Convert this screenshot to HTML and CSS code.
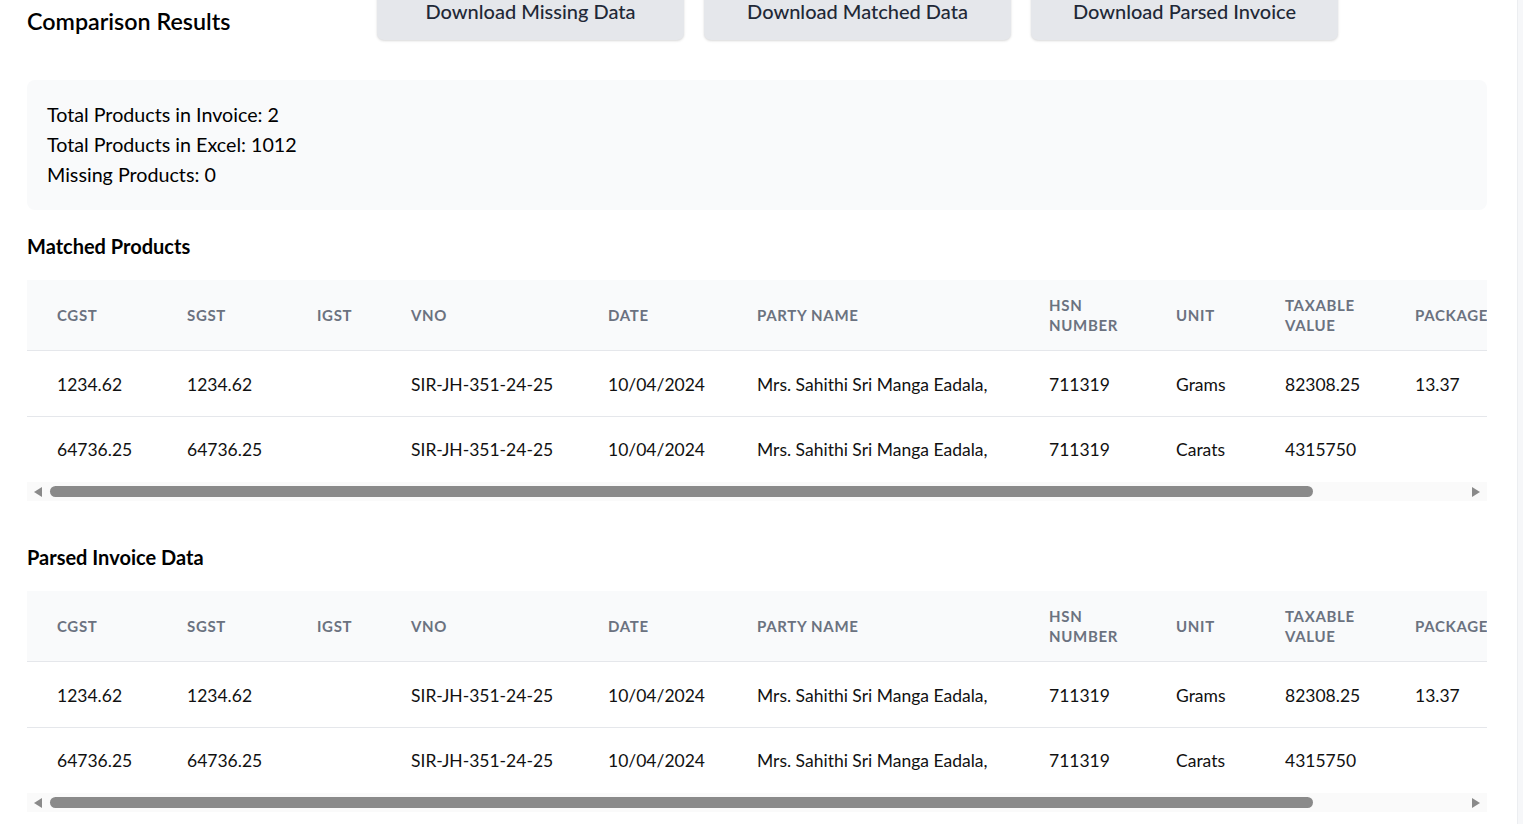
FILE: index.html
```html
<!DOCTYPE html>
<html lang="en">
<head>
<meta charset="utf-8">
<title>Comparison Results</title>
<link rel="stylesheet" href="styles.css">
</head>
<body>
<div class="layout">
  <main class="page">
    <header class="page-header">
      <h1 class="page-title">Comparison Results</h1>
      <div class="actions">
        <button class="btn">Download Missing Data</button>
        <button class="btn">Download Matched Data</button>
        <button class="btn">Download Parsed Invoice</button>
      </div>
    </header>

    <section class="summary">
      <p>Total Products in Invoice: 2</p>
      <p>Total Products in Excel: 1012</p>
      <p>Missing Products: 0</p>
    </section>

    <section class="block">
      <h2 class="block-title">Matched Products</h2>
      <div class="table-wrap">
        <div class="table-clip">
          <table class="data">
            <colgroup>
              <col class="c1"><col class="c2"><col class="c3"><col class="c4"><col class="c5">
              <col class="c6"><col class="c7"><col class="c8"><col class="c9"><col class="c10">
            </colgroup>
            <thead>
              <tr>
                <th>CGST</th><th>SGST</th><th>IGST</th><th>VNO</th><th>DATE</th><th>PARTY NAME</th>
                <th>HSN<br>NUMBER</th><th>UNIT</th><th>TAXABLE<br>VALUE</th><th>PACKAGES</th>
              </tr>
            </thead>
            <tbody>
              <tr>
                <td>1234.62</td><td>1234.62</td><td></td><td>SIR-JH-351-24-25</td><td>10/04/2024</td>
                <td>Mrs. Sahithi Sri Manga Eadala,</td><td>711319</td><td>Grams</td><td>82308.25</td><td>13.37</td>
              </tr>
              <tr>
                <td>64736.25</td><td>64736.25</td><td></td><td>SIR-JH-351-24-25</td><td>10/04/2024</td>
                <td>Mrs. Sahithi Sri Manga Eadala,</td><td>711319</td><td>Carats</td><td>4315750</td><td></td>
              </tr>
            </tbody>
          </table>
        </div>
        <div class="hscroll">
          <span class="arrow arrow-left"></span>
          <div class="track"><div class="thumb"></div></div>
          <span class="arrow arrow-right"></span>
        </div>
      </div>
    </section>

    <section class="block">
      <h2 class="block-title">Parsed Invoice Data</h2>
      <div class="table-wrap">
        <div class="table-clip">
          <table class="data">
            <colgroup>
              <col class="c1"><col class="c2"><col class="c3"><col class="c4"><col class="c5">
              <col class="c6"><col class="c7"><col class="c8"><col class="c9"><col class="c10">
            </colgroup>
            <thead>
              <tr>
                <th>CGST</th><th>SGST</th><th>IGST</th><th>VNO</th><th>DATE</th><th>PARTY NAME</th>
                <th>HSN<br>NUMBER</th><th>UNIT</th><th>TAXABLE<br>VALUE</th><th>PACKAGES</th>
              </tr>
            </thead>
            <tbody>
              <tr>
                <td>1234.62</td><td>1234.62</td><td></td><td>SIR-JH-351-24-25</td><td>10/04/2024</td>
                <td>Mrs. Sahithi Sri Manga Eadala,</td><td>711319</td><td>Grams</td><td>82308.25</td><td>13.37</td>
              </tr>
              <tr>
                <td>64736.25</td><td>64736.25</td><td></td><td>SIR-JH-351-24-25</td><td>10/04/2024</td>
                <td>Mrs. Sahithi Sri Manga Eadala,</td><td>711319</td><td>Carats</td><td>4315750</td><td></td>
              </tr>
            </tbody>
          </table>
        </div>
        <div class="hscroll">
          <span class="arrow arrow-left"></span>
          <div class="track"><div class="thumb"></div></div>
          <span class="arrow arrow-right"></span>
        </div>
      </div>
    </section>
  </main>
  <aside class="edge"></aside>
</div>
</body>
</html>
```

FILE: styles.css
```css
* { box-sizing: border-box; }

html, body {
  margin: 0;
  padding: 0;
  background: #ffffff;
  overflow: hidden;
}

body {
  font-family: "Lato", "Open Sans", "Noto Sans", sans-serif;
  color: #111111;
}

.layout {
  display: flex;
  width: 1523px;
  height: 824px;
  overflow: hidden;
}

.page {
  flex: 1 1 auto;
  min-width: 0;
  padding: 0 30px 0 27px;
  margin-top: -18px;
}

.edge {
  flex: 0 0 6px;
  background: #f6f7f9;
  border-left: 1px solid #eceef1;
}

.page-header {
  display: flex;
  align-items: flex-start;
}

.page-title {
  flex: 0 0 350px;
  margin: 25px 0 0;
  font-size: 23.3px;
  line-height: 28px;
  font-weight: 600;
  color: #000;
}

.actions {
  display: flex;
  gap: 20px;
}

.btn {
  width: 307px;
  padding: 15px 0;
  border: 0;
  border-radius: 7px;
  background: #e5e7eb;
  color: #1f2937;
  font-family: inherit;
  font-size: 20px;
  line-height: 28px;
  font-weight: 500;
  box-shadow: 0 1px 3px rgba(0,0,0,0.10), 0 1px 2px rgba(0,0,0,0.06);
}

.summary {
  margin-top: 40px;
  padding: 20px;
  background: #f9fafb;
  border-radius: 8px;
}

.summary p {
  margin: 0;
  font-size: 19.7px;
  line-height: 30px;
  color: #000;
}

.block {
  display: flow-root;
}

.block-title {
  margin: 22px 0 20px;
  font-size: 20px;
  line-height: 28px;
  font-weight: 700;
  color: #000;
}

.table-wrap {
  margin-bottom: 20px;
}

.table-clip {
  overflow: hidden;
}

.data {
  width: 1648px;
  table-layout: fixed;
  border-collapse: collapse;
}

.c1 { width: 130px; }
.c2 { width: 130px; }
.c3 { width: 94px; }
.c4 { width: 197px; }
.c5 { width: 149px; }
.c6 { width: 292px; }
.c7 { width: 127px; }
.c8 { width: 109px; }
.c9 { width: 130px; }
.c10 { width: 290px; }

.data th {
  background: #f9fafb;
  padding: 15px 30px;
  text-align: left;
  vertical-align: middle;
  font-size: 15px;
  line-height: 20px;
  font-weight: 700;
  letter-spacing: 0.045em;
  color: #6b7280;
  white-space: nowrap;
  border-bottom: 1px solid #e5e7eb;
}

.data td {
  padding: 20px 30px;
  font-size: 17.5px;
  line-height: 25px;
  color: #111111;
  white-space: nowrap;
  border-bottom: 1px solid #e5e7eb;
}

.data tbody tr:first-child td {
  padding-top: 21px;
  padding-bottom: 19px;
}

.data tbody tr:last-child td {
  border-bottom: 0;
}

.hscroll {
  display: flex;
  align-items: center;
  height: 19px;
  background: #fafafa;
  padding: 0 6px;
}

.arrow {
  width: 0;
  height: 0;
  border-top: 5.5px solid transparent;
  border-bottom: 5.5px solid transparent;
}

.arrow-left {
  border-right: 8px solid #8a8a8a;
  margin-left: 1px;
}

.arrow-right {
  border-left: 8px solid #8a8a8a;
  margin-right: 1px;
}

.track {
  flex: 1;
  padding: 0 8px;
}

.thumb {
  width: 1263px;
  height: 11px;
  border-radius: 5.5px;
  background: #8a8a8a;
}
```
